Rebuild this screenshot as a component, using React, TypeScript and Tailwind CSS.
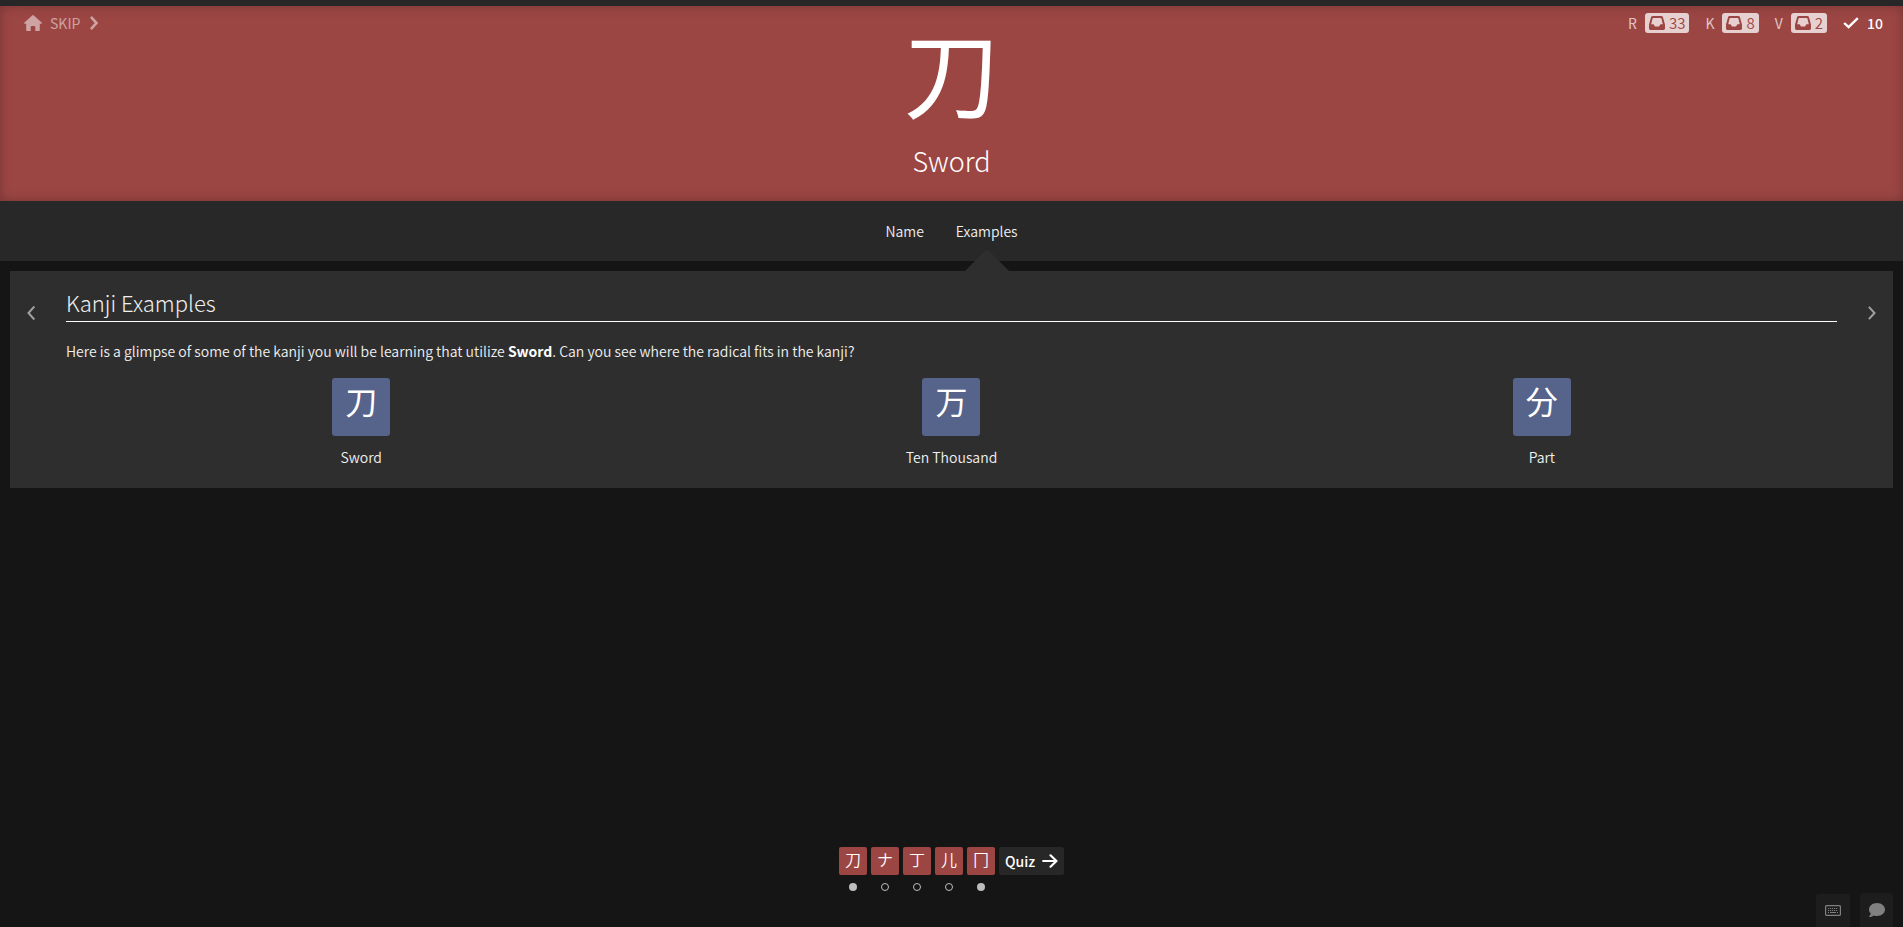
import React from "react";
import { FaComment } from "react-icons/fa";

type Kanji = { character: string; meaning: string };
type Lesson = { character: string; done: boolean };

const examples: Kanji[] = [
  { character: "刀", meaning: "Sword" },
  { character: "万", meaning: "Ten Thousand" },
  { character: "分", meaning: "Part" },
];

const lessons: Lesson[] = [
  { character: "刀", done: true },
  { character: "ナ", done: false },
  { character: "丁", done: false },
  { character: "儿", done: false },
  { character: "冂", done: true },
];

const counts = [
  { label: "R", name: "Radicals", count: 33 },
  { label: "K", name: "Kanji", count: 8 },
  { label: "V", name: "Vocabulary", count: 2 },
];

function HomeIcon() {
  return (
    <svg viewBox="0 0 18 16" className="h-4 w-[18px]" fill="currentColor" aria-hidden="true">
      <path d="M8.2.4Q9-.3 9.8.4L17.6 7.600Q18.300 8.400 17.300 8.700H15.800V15.200Q15.800 16 15 16H11.300V12Q11.300 11 10.300 11H7.700Q6.700 11 6.700 12V16H3Q2.200 16 2.200 15.200V8.700H.7Q-.3 8.400 .4 7.600Z" />
    </svg>
  );
}

function InboxIcon() {
  return (
    <svg viewBox="0 0 16 14" className="h-[14px] w-4" fill="currentColor" fillRule="evenodd" aria-hidden="true">
      <path d="M3.600 0H12.400Q13.500 0 13.900 1L15.700 7.500Q16 8.300 16 9V12.600Q16 14 14.600 14H1.400Q0 14 0 12.600V9Q0 8.300 .3 7.500L2.100 1Q2.500 0 3.600 0ZM4.300 1.900Q3.800 1.900 3.600 2.500L2.200 8.300H4.600L6 10.400H10L11.400 8.300H13.800L12.400 2.500Q12.200 1.900 11.700 1.900Z" />
    </svg>
  );
}

function KeyboardIcon() {
  return (
    <svg viewBox="0 0 16 11" className="h-[11px] w-4" fill="none" stroke="currentColor" aria-hidden="true">
      <rect x=".6" y=".6" width="14.8" height="9.800" rx="1" strokeWidth="1.2" />
      <path d="M3 3.500h10M3 5.500h10" strokeDasharray="1.200 .8" />
      <path d="M3 7.500h1M5 7.500h6M12 7.500h1" />
    </svg>
  );
}

function Chevron({ left = false, bold = false }: { left?: boolean; bold?: boolean }) {
  return (
    <svg
      viewBox="0 0 8 14"
      className="h-[14px] w-2"
      fill="none"
      stroke="currentColor"
      strokeWidth={bold ? 2.6 : 2}
      aria-hidden="true"
    >
      <path d={left ? "M7.300 .5 1.500 7l5.800 6.500" : "M.9 .9 6.500 7 .9 13.100"} />
    </svg>
  );
}

export default function App() {
  return (
    <div className="flex min-h-screen flex-col border-t-[6px] border-[#272727] bg-[#151515] font-['Noto_Sans_CJK_JP','Noto_Sans',sans-serif] text-sm font-[350] text-[#f0f0f0]">
      <header className="relative flex h-[195px] flex-col items-center bg-[#9c4644] pt-1 text-white shadow-[inset_0_0_12px_rgba(0,0,0,0.25)]">
        <div className="absolute inset-x-0 top-0 flex items-center justify-between px-5 pt-[7px] pl-6 font-normal">
          <div className="flex h-5 items-center gap-2 text-white/50">
            <a href="#home" aria-label="Home">
              <HomeIcon />
            </a>
            <a href="#skip" className="flex items-center gap-[10px]">
              SKIP <Chevron bold />
            </a>
          </div>
          <div className="flex h-5 items-center gap-4">
            {counts.map((item) => (
              <div key={item.label} className="flex items-center gap-2" title={item.name}>
                <span className="text-white/70">{item.label}</span>
                <span className="flex h-5 items-center gap-1 rounded-[3px] bg-[#e6d0d0] px-1 text-[15px] font-[350] text-[#9c4644]">
                  <InboxIcon />
                  {item.count}
                </span>
              </div>
            ))}
            <div className="flex items-center gap-2 font-medium">
              <svg viewBox="0 0 16 12" className="h-3 w-4" fill="none" stroke="currentColor" strokeWidth="2.4" aria-hidden="true">
                <path d="M1.200 6 5.600 10.200 14.800 1.200" />
              </svg>
              10
            </div>
          </div>
        </div>
        <div className="text-[96px] leading-[120px] font-normal">刀</div>
        <h1 className="mt-[13px] text-[27px] leading-9 font-light">Sword</h1>
      </header>

      <nav className="flex h-[60px] items-center justify-center gap-8 bg-[#282828]">
        <a href="#name">Name</a>
        <a href="#examples" className="relative flex h-full items-center" aria-current="page">
          Examples
          <svg viewBox="0 0 44 22" className="absolute top-[48px] left-1/2 h-[22px] w-11 -translate-x-1/2" fill="#2e2e2e" aria-hidden="true">
            <path d="M22 0 44 22H0Z" />
          </svg>
        </a>
      </nav>

      <main id="examples" className="mx-[10px] mt-[10px] flex bg-[#2e2e2e] pb-[21px]">
        <button type="button" aria-label="Previous" className="flex w-14 items-start pt-[35px] pl-[17px] text-[#a0a0a0]">
          <Chevron left />
        </button>
        <section className="flex-1">
          <h2 className="mt-4 border-b border-white pb-[3px] text-[22px] leading-[31px] font-light">Kanji Examples</h2>
          <p className="mt-[19px] leading-5">
            Here is a glimpse of some of the kanji you will be learning that utilize{" "}
            <strong className="font-bold text-white">Sword</strong>. Can you see where the radical fits in the kanji?
          </p>
          <ul className="mt-[17px] grid grid-cols-3">
            {examples.map((item) => (
              <li key={item.meaning} className="flex flex-col items-center gap-[11px]">
                <a
                  href={`#${item.character}`}
                  className="flex h-[58px] w-[58px] justify-center rounded-[3px] bg-[#56638a] text-[32px] leading-[44px] font-normal text-white"
                >
                  {item.character}
                </a>
                <span className="leading-5">{item.meaning}</span>
              </li>
            ))}
          </ul>
        </section>
        <button type="button" aria-label="Next" className="flex w-14 items-start justify-end pt-[35px] pr-[17px] text-[#a0a0a0]">
          <Chevron />
        </button>
      </main>

      <footer className="relative mt-auto flex justify-center pb-9">
        <ul className="flex items-start gap-1">
          {lessons.map((lesson) => (
            <li key={lesson.character} className="flex flex-col items-center gap-2">
              <a
                href={`#${lesson.character}`}
                className="flex h-7 w-7 justify-center rounded-[2px] bg-[#9c4644] text-base leading-[25px] text-white"
              >
                {lesson.character}
              </a>
              <span
                className={
                  lesson.done
                    ? "h-2 w-2 rounded-full bg-[#bdbdbd]"
                    : "h-2 w-2 rounded-full border border-[#bdbdbd]"
                }
              />
            </li>
          ))}
          <li>
            <button type="button" className="flex h-7 items-center gap-[7px] rounded-[2px] bg-[#272727] px-[6px] text-sm font-medium text-white">
              Quiz
              <svg viewBox="0 0 16 14" className="h-[14px] w-4" fill="none" stroke="currentColor" strokeWidth="2.2" aria-hidden="true">
                <path d="M1.200 7H14.500M8.500 1.300 14.500 7 8.500 12.700" strokeLinecap="round" strokeLinejoin="round" />
              </svg>
            </button>
          </li>
        </ul>
        <div className="absolute right-[10px] bottom-0 flex items-end gap-[10px] text-base text-[#808080]">
          <button type="button" aria-label="Keyboard shortcuts" className="flex h-[33px] w-[34px] items-center justify-center rounded-t-[3px] bg-[#1d1d1d]">
            <KeyboardIcon />
          </button>
          <button type="button" aria-label="Chat" className="flex h-[34px] w-[33px] items-center justify-center rounded-t-[3px] bg-[#1d1d1d]">
            <FaComment />
          </button>
        </div>
      </footer>
    </div>
  );
}
